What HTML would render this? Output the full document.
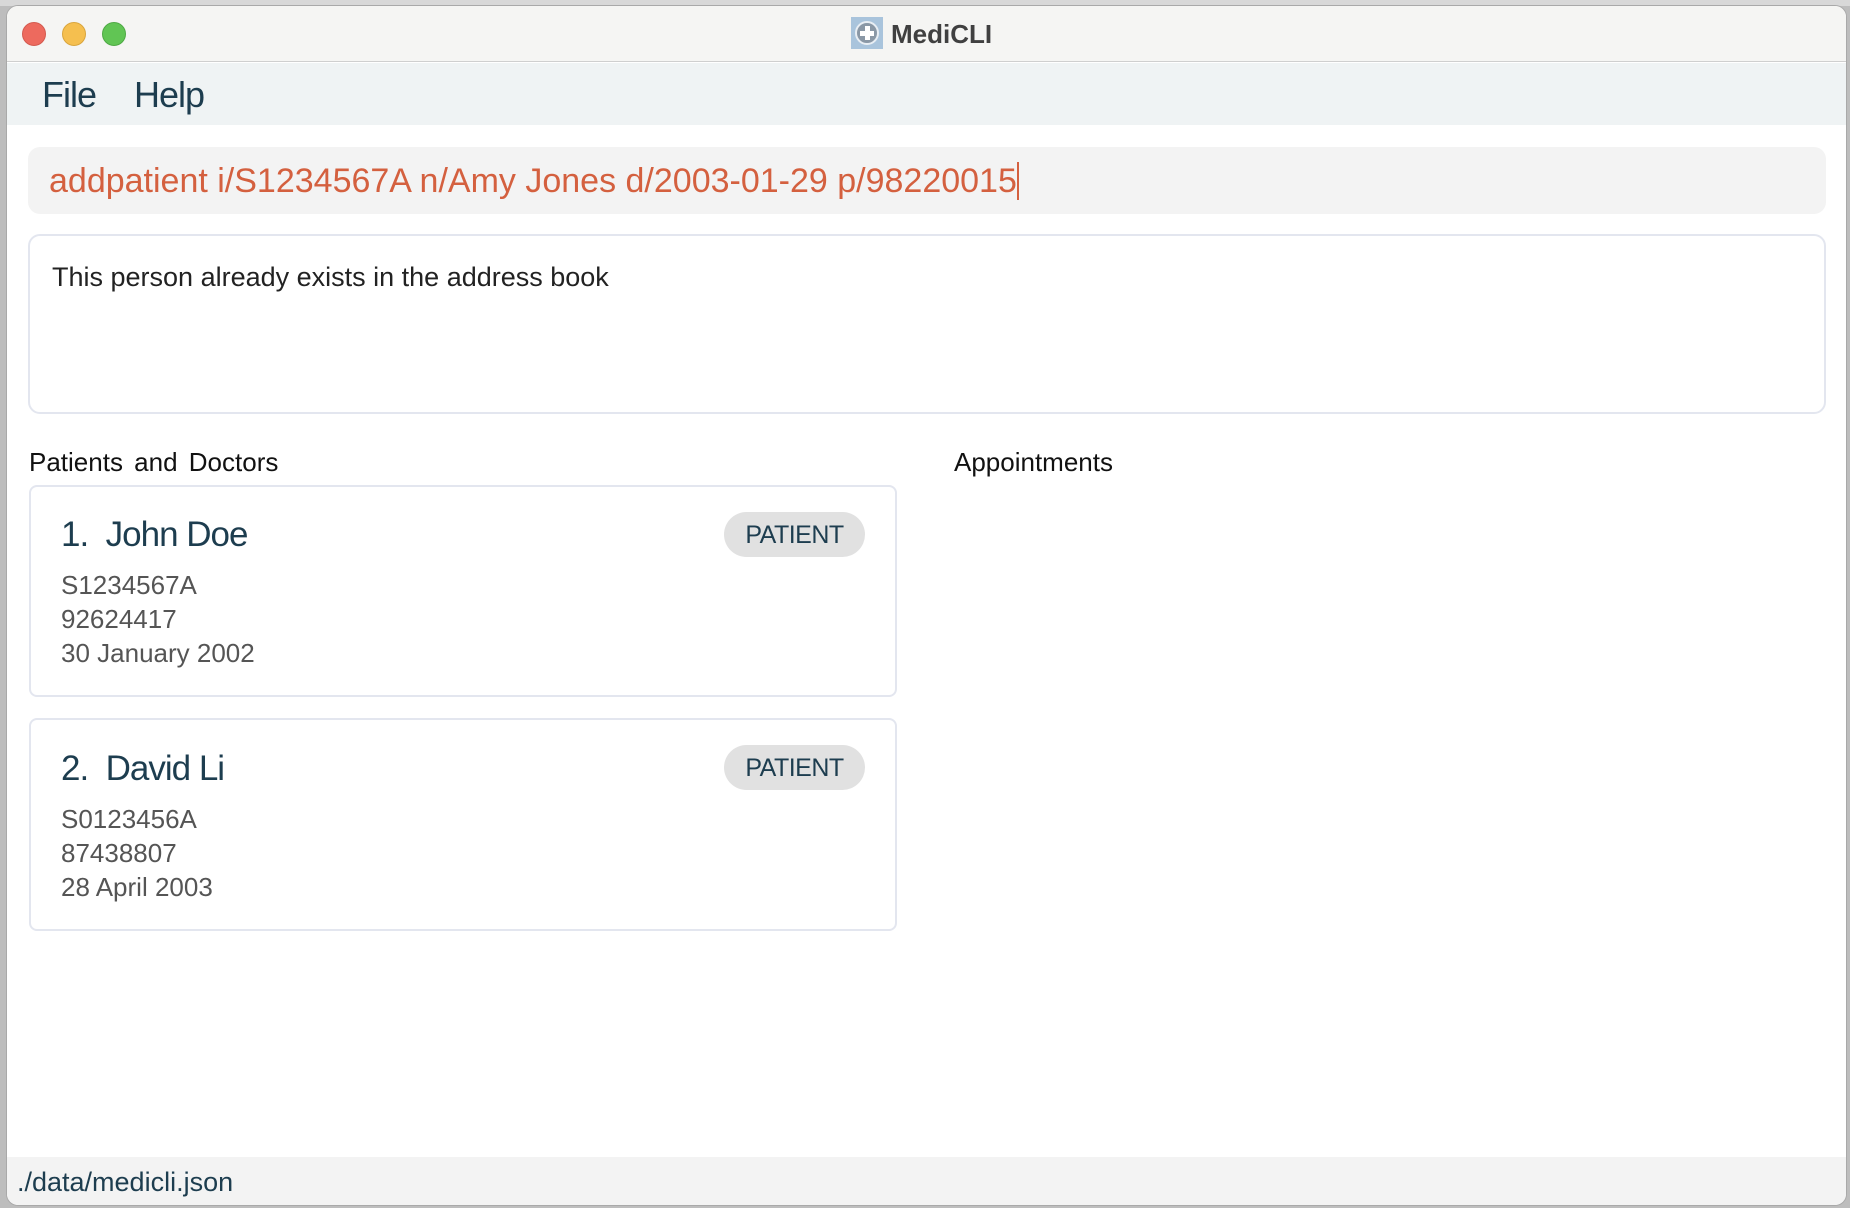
<!DOCTYPE html>
<html><head><meta charset="utf-8"><style>
*{margin:0;padding:0;box-sizing:border-box}
body{width:1850px;height:1208px;background:#bdbdbd;position:relative;overflow:hidden;font-family:"Liberation Sans",sans-serif}
.a{position:absolute;white-space:nowrap}
#win{position:absolute;left:6px;top:5px;width:1841px;height:1201px;background:#fff;border-radius:12px;overflow:hidden;border:1px solid #a9a9a9}
.t{position:absolute;line-height:1;white-space:nowrap}
</style></head><body>
<div class="a" style="left:0;top:0;width:1850px;height:6px;background:#d8d8d8"></div>
<div id="win">
 <div class="a" style="left:0;top:0;width:1841px;height:56px;background:#f5f5f3;border-bottom:1px solid #cfcfcf"></div>
 <div class="a" style="left:15px;top:16px;width:24px;height:24px;border-radius:50%;background:#ed6a5e;border:1px solid #d35a4f"></div>
 <div class="a" style="left:55px;top:16px;width:24px;height:24px;border-radius:50%;background:#f5bf4f;border:1px solid #d9a53d"></div>
 <div class="a" style="left:95px;top:16px;width:24px;height:24px;border-radius:50%;background:#61c554;border:1px solid #4ea944"></div>
 <div class="a" style="left:844px;top:11px;width:32px;height:32px;background:#a9c4dc">
  <div class="a" style="left:4px;top:4px;width:24px;height:24px;border-radius:50%;background:#8a98a6;border:2px solid #e8eef4"></div>
  <div class="a" style="left:14px;top:9px;width:5px;height:14px;background:#fff"></div>
  <div class="a" style="left:9px;top:14px;width:14px;height:5px;background:#fff"></div>
 </div>
 <div class="t" style="left:884px;top:15px;font-size:26px;font-weight:bold;color:#404040">MediCLI</div>
 <div class="a" style="left:0;top:57px;width:1841px;height:62px;background:#eff3f4"></div>
 <div class="t" style="left:35px;top:71px;font-size:36px;color:#1d3d4f;letter-spacing:-1px">File</div>
 <div class="t" style="left:127px;top:71px;font-size:36px;color:#1d3d4f;letter-spacing:-1px">Help</div>
 <div class="a" style="left:21px;top:141px;width:1798px;height:67px;background:#f3f3f3;border-radius:12px"></div>
 <div class="t" style="left:42px;top:156px;font-size:34px;color:#d4603f">addpatient i/S1234567A n/Amy Jones d/2003-01-29 p/98220015<span style="display:inline-block;width:2px;height:38px;background:#d4603f;vertical-align:-8px"></span></div>
 <div class="a" style="left:21px;top:228px;width:1798px;height:180px;border:2px solid #e3e6ef;border-radius:12px"></div>
 <div class="t" style="left:45px;top:258px;font-size:27px;color:#222">This person already exists in the address book</div>
 <div class="t" style="left:22px;top:443px;font-size:26px;color:#111;word-spacing:4px">Patients and Doctors</div>
 <div class="t" style="left:947px;top:443px;font-size:26px;color:#111">Appointments</div>
 <div class="a" style="left:22px;top:479px;width:868px;height:212px;border:2px solid #e3e6ef;border-radius:8px"></div>
 <div class="t" style="left:54px;top:511px;font-size:35px;color:#1d3d4f;letter-spacing:-1px">1.&nbsp; John Doe</div>
 <div class="a" style="left:717px;top:506px;width:141px;height:45px;border-radius:23px;background:#e1e1e1"></div>
 <div class="t" style="left:717px;top:517px;width:141px;text-align:center;font-size:25px;color:#1d3d4f;letter-spacing:-0.5px">PATIENT</div>
 <div class="t" style="left:54px;top:562px;font-size:26px;color:#555;line-height:34px">S1234567A<br>92624417<br>30 January 2002</div>
 <div class="a" style="left:22px;top:712px;width:868px;height:213px;border:2px solid #e3e6ef;border-radius:8px"></div>
 <div class="t" style="left:54px;top:745px;font-size:35px;color:#1d3d4f;letter-spacing:-1px">2.&nbsp; David Li</div>
 <div class="a" style="left:717px;top:739px;width:141px;height:45px;border-radius:23px;background:#e1e1e1"></div>
 <div class="t" style="left:717px;top:750px;width:141px;text-align:center;font-size:25px;color:#1d3d4f;letter-spacing:-0.5px">PATIENT</div>
 <div class="t" style="left:54px;top:796px;font-size:26px;color:#555;line-height:34px">S0123456A<br>87438807<br>28 April 2003</div>
 <div class="a" style="left:0;top:1151px;width:1841px;height:50px;background:#f3f3f3"></div>
 <div class="t" style="left:10px;top:1163px;font-size:27px;color:#1d3d4f">./data/medicli.json</div>
</div>
</body></html>
